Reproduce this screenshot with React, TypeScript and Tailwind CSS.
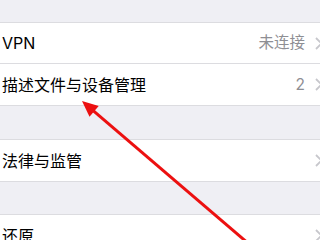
import React from "react";

const Chevron = () => (
  <svg width="8" height="13" viewBox="0 0 8 13" className="shrink-0 mr-[-3px]">
    <path d="M1 1l5.5 5.5L1 12" fill="none" stroke="#c7c7cc" strokeWidth="1.8" />
  </svg>
);

const Row = ({ label, value, last }: { label: string; value?: string; last?: boolean }) => (
  <div className={"h-[41px] flex items-center justify-between pl-[2px] bg-white " + (last ? "" : "border-b border-[#dcdce0]")}>
    <span className="text-[16px] text-black">{label}</span>
    <div className="flex items-center gap-[10px]">
      {value && <span className="text-[15.5px] text-[#8e8e93]">{value}</span>}
      <Chevron />
    </div>
  </div>
);

export default function App() {
  return (
    <div className="relative w-[320px] h-[240px] overflow-hidden bg-[#efeff4] font-['Inter','Noto_Sans_CJK_SC',sans-serif]">
      <div className="h-[22px]" />
      <div className="border-y border-[#dcdce0]">
        <Row label="VPN" value="未连接" />
        <Row label="描述文件与设备管理" value="2" last />
      </div>
      <div className="h-[33px]" />
      <div className="border-y border-[#dcdce0]">
        <Row label="法律与监管" last />
      </div>
      <div className="h-[32px]" />
      <div className="border-t border-[#dcdce0]">
        <Row label="还原" last />
      </div>

      {/* red arrow */}
      <svg className="absolute left-0 top-0" width="320" height="240" viewBox="0 0 320 240">
        <line x1="92" y1="109.6" x2="270" y2="262" stroke="#ec1010" strokeWidth="3" />
        <polygon points="82,101 89.5,116.7 98.7,106.1" fill="#ec1010" />
      </svg>
    </div>
  );
}
